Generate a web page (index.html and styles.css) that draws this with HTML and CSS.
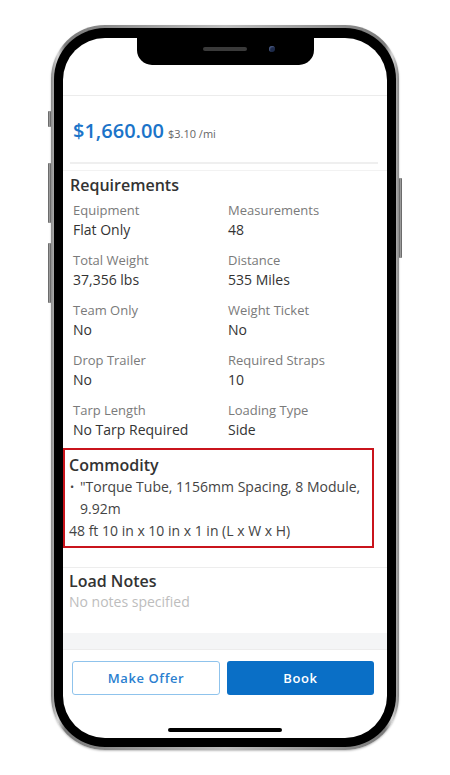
FILE: index.html
```html
<!DOCTYPE html>
<html lang="en">
<head>
<meta charset="utf-8">
<title>Load Details</title>
<link rel="stylesheet" href="styles.css">
</head>
<body>
<div class="phone">
  <span class="side-btn left b1"></span>
  <span class="side-btn left b2"></span>
  <span class="side-btn left b3"></span>
  <span class="side-btn right b4"></span>
  <div class="bezel">
    <div class="screen">
      <div class="notch">
        <span class="speaker"></span>
        <span class="camera"></span>
      </div>
      <div class="top-space"></div>
      <div class="price-row">
        <span class="price">$1,660.00</span>
        <span class="rate">$3.10 /mi</span>
      </div>
      <div class="divider-inset"></div>
      <div class="divider-full"></div>
      <section class="requirements">
        <h2 class="section-title">Requirements</h2>
        <div class="req-grid">
          <div class="item"><div class="label">Equipment</div><div class="value">Flat Only</div></div>
          <div class="item"><div class="label">Measurements</div><div class="value">48</div></div>
          <div class="item"><div class="label">Total Weight</div><div class="value">37,356 lbs</div></div>
          <div class="item"><div class="label">Distance</div><div class="value">535 Miles</div></div>
          <div class="item"><div class="label">Team Only</div><div class="value">No</div></div>
          <div class="item"><div class="label">Weight Ticket</div><div class="value">No</div></div>
          <div class="item"><div class="label">Drop Trailer</div><div class="value">No</div></div>
          <div class="item"><div class="label">Required Straps</div><div class="value">10</div></div>
          <div class="item"><div class="label">Tarp Length</div><div class="value">No Tarp Required</div></div>
          <div class="item"><div class="label">Loading Type</div><div class="value">Side</div></div>
        </div>
      </section>
      <section class="commodity">
        <h2 class="section-title">Commodity</h2>
        <ul class="commodity-list">
          <li>"Torque Tube, 1156mm Spacing, 8 Module, 9.92m</li>
        </ul>
        <div class="dims">48 ft 10 in x 10 in x 1 in (L x W x H)</div>
      </section>
      <section class="notes">
        <h2 class="section-title">Load Notes</h2>
        <div class="empty">No notes specified</div>
      </section>
      <div class="band"></div>
      <div class="actions">
        <button class="btn btn-outline">Make Offer</button>
        <button class="btn btn-solid">Book</button>
      </div>
      <div class="home-indicator"></div>
    </div>
  </div>
</div>
</body>
</html>
```
FILE: styles.css
```css
* { box-sizing: border-box; }
html, body {
  margin: 0;
  padding: 0;
  background: #ffffff;
  width: 450px;
  height: 775px;
  overflow: hidden;
  font-family: "Open Sans", "Noto Sans", sans-serif;
}
.phone {
  position: relative;
  margin: 25px 0 0 51px;
  width: 348px;
  height: 725px;
  border-radius: 54px;
  padding: 3px;
  background: linear-gradient(90deg, #8a8a8a 0%, #d6d6d6 2%, #7a7a7a 4%, #bdbdbd 50%, #7a7a7a 96%, #d6d6d6 98%, #8a8a8a 100%);
  box-shadow: 0 1px 2px rgba(0,0,0,0.25);
}
.side-btn {
  position: absolute;
  width: 3px;
  background: linear-gradient(90deg, #555, #9a9a9a, #555);
  border-radius: 1px;
}
.side-btn.left { left: -3px; }
.side-btn.right { right: -3px; }
.b1 { top: 86px; height: 16px; }
.b2 { top: 138px; height: 60px; }
.b3 { top: 218px; height: 60px; }
.b4 { top: 153px; height: 80px; }
.bezel {
  width: 100%;
  height: 100%;
  background: #000;
  border-radius: 51px;
  padding: 10px 9px 9px 9px;
}
.screen {
  position: relative;
  width: 324px;
  height: 700px;
  background: #fff;
  border-radius: 42px;
  overflow: hidden;
  display: flex;
  flex-direction: column;
  color: #333;
}
.notch {
  position: absolute;
  top: 0;
  left: 74px;
  width: 177px;
  height: 27px;
  background: #000;
  border-radius: 0 0 15px 15px;
}
.speaker {
  position: absolute;
  left: 66px;
  top: 9px;
  width: 44px;
  height: 4px;
  border-radius: 2px;
  background: #3a3a3a;
}
.camera {
  position: absolute;
  left: 132px;
  top: 8px;
  width: 6px;
  height: 6px;
  border-radius: 50%;
  background: #1d2a4a;
  box-shadow: inset 1px 1px 1px #4a5a80;
}
.top-space {
  height: 58px;
  flex: none;
  border-bottom: 1px solid #ececec;
}
.price-row {
  flex: none;
  padding: 22px 0 15px 10px;
  line-height: 26px;
  display: flex;
  align-items: baseline;
  gap: 4px;
}
.price {
  font-size: 20px;
  font-weight: 600;
  color: #1b74c9;
}
.rate {
  font-size: 11px;
  color: #666;
}
.divider-inset {
  flex: none;
  height: 2px;
  margin: 0 9px 0 7px;
  background: #efefef;
}
.divider-full {
  flex: none;
  height: 1px;
  margin-top: 6px;
  background: #f2f2f2;
}
.section-title {
  margin: 0;
  font-size: 16px;
  font-weight: 600;
  line-height: 22px;
  color: #333;
}
.requirements {
  flex: none;
  padding: 3px 0 0 7px;
}
.req-grid {
  display: grid;
  grid-template-columns: 155px 1fr;
  row-gap: 10px;
  margin-top: 4px;
  padding-left: 3px;
}
.label {
  font-size: 13px;
  line-height: 20px;
  color: #7a7a7a;
}
.value {
  font-size: 14px;
  line-height: 20px;
  color: #333;
}
.commodity {
  flex: none;
  margin-top: 8px;
  width: 311px;
  border: 2px solid #c9141c;
  padding: 4px 4px 4px 4px;
}
.commodity-list {
  margin: 0;
  padding: 0 0 0 11px;
  list-style: none;
  font-size: 14px;
  line-height: 22px;
  color: #444;
}
.commodity-list li {
  position: relative;
}
.commodity-list li::before {
  content: "•";
  position: absolute;
  left: -10px;
  top: 0;
  font-size: 11px;
  color: #444;
}
.dims {
  font-size: 14px;
  line-height: 22px;
  color: #444;
}
.notes {
  flex: none;
  margin-top: 19px;
  border-top: 1px solid #ededed;
  padding: 2px 0 21px 6px;
}
.empty {
  font-size: 14px;
  line-height: 20px;
  color: #bdbdbd;
}
.band {
  flex: none;
  height: 17px;
  background: #f4f5f6;
  border-bottom: 1px solid #ececec;
}
.actions {
  flex: none;
  display: flex;
  gap: 7px;
  padding: 11px 13px 0 9px;
}
.btn {
  height: 34px;
  font-family: "Open Sans", "Noto Sans", sans-serif;
  font-size: 13px;
  font-weight: 600;
  letter-spacing: 0.6px;
  border-radius: 3px;
  cursor: pointer;
}
.btn-outline {
  width: 148px;
  background: #fff;
  border: 1.5px solid #8fc3ec;
  color: #2a7fd0;
}
.btn-solid {
  flex: 1;
  background: #0a6fc6;
  border: none;
  color: #fff;
}
.home-indicator {
  flex: none;
  margin: 33px auto 0;
  width: 114px;
  height: 4px;
  border-radius: 2px;
  background: #000;
}
```
